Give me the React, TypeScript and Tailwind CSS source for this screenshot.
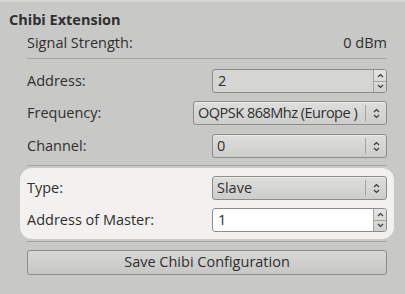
import React from 'react';

function UpDown() {
    return <svg width="7" height="11" viewBox="0 0 7 11" fill="none" stroke="#3a3a3a" strokeWidth="1.2">
        <path d="M1 4 L3.5 1.5 L6 4" />
        <path d="M1 7 L3.5 9.5 L6 7" />
    </svg>
}

function Combo({ value, width, tight }: { value: string; width: string; tight?: boolean }) {
    return <div className={`${width} h-[24px] flex items-stretch rounded-[3px] border border-[#8c8c8a] bg-gradient-to-b from-[#dededc] to-[#cdcdcb] shadow-[inset_0_1px_0_#ececea]`}>
        <div className={`flex-1 flex items-center pl-[4px] leading-none whitespace-nowrap overflow-hidden ${tight ? 'tracking-[-0.5px]' : ''}`}>{value}</div>
        <div className="w-[21px] my-[3px] border-l border-[#a4a4a2] flex items-center justify-center">
            <UpDown />
        </div>
    </div>
}

function SpinBox({ value, white }: { value: string; white?: boolean }) {
    return <div className={`w-[175px] h-[24px] flex items-stretch rounded-[3px] border border-[#8c8c8a] ${white ? 'bg-white' : 'bg-[#d5d5d3]'}`}>
        <div className="flex-1 flex items-center pl-[5px] leading-none">{value}</div>
        <div className="w-[13px] border-l border-[#a4a4a2] flex flex-col bg-gradient-to-b from-[#e4e4e2] to-[#d0d0ce] rounded-r-[2px]">
            <div className="flex-1 flex items-center justify-center border-b border-[#a4a4a2]">
                <svg width="7" height="5" viewBox="0 0 7 5" fill="none" stroke="#3a3a3a" strokeWidth="1.2"><path d="M1 4 L3.5 1.5 L6 4" /></svg>
            </div>
            <div className="flex-1 flex items-center justify-center">
                <svg width="7" height="5" viewBox="0 0 7 5" fill="none" stroke="#3a3a3a" strokeWidth="1.2"><path d="M1 1 L3.5 3.5 L6 1" /></svg>
            </div>
        </div>
    </div>
}

export default function App() {
    return <div className="w-[405px] h-[294px] bg-[#c8c8c6] border-t-2 border-[#d6d6d4] text-[14.5px] text-[#2f2f2f] font-['Open_Sans',sans-serif] overflow-hidden">
        <h2 className="pl-[9px] pt-[8px] font-bold leading-[20px]">Chibi Extension</h2>
        <div className="ml-[27px] w-[360px]">
            <div className="mt-[3px] flex justify-between leading-[20px]">
                <span>Signal Strength:</span>
                <span>0 dBm</span>
            </div>
            <div className="mt-[5px] h-px bg-[#a6a6a4]" />
            <div className="mt-[10px] flex items-center justify-between">
                <span>Address:</span>
                <SpinBox value="2" />
            </div>
            <div className="mt-[8px] flex items-center justify-between">
                <span>Frequency:</span>
                <Combo value="OQPSK 868Mhz (Europe )" width="w-[194px]" tight />
            </div>
            <div className="mt-[9px] flex items-center justify-between">
                <span>Channel:</span>
                <Combo value="0" width="w-[175px]" />
            </div>
            <div className="mt-[7px] h-px bg-[#a6a6a4]" />
            <div className="mt-[2px] -mx-[7px] px-[7px] pt-[8px] pb-[7px] rounded-[12px] bg-[#f2f1f0]">
                <div className="flex items-center justify-between">
                    <span>Type:</span>
                    <Combo value="Slave" width="w-[175px]" />
                </div>
                <div className="mt-[8px] flex items-center justify-between">
                    <span>Address of Master:</span>
                    <SpinBox value="1" white />
                </div>
            </div>
            <div className="mt-[2px] h-px bg-[#a6a6a4]" />
            <button className="mt-[8px] w-[360px] h-[25px] rounded-[3px] border border-[#8c8c8a] bg-gradient-to-b from-[#d8d8d6] to-[#c6c6c4] leading-none">
                Save Chibi Configuration
            </button>
        </div>
    </div>
}
